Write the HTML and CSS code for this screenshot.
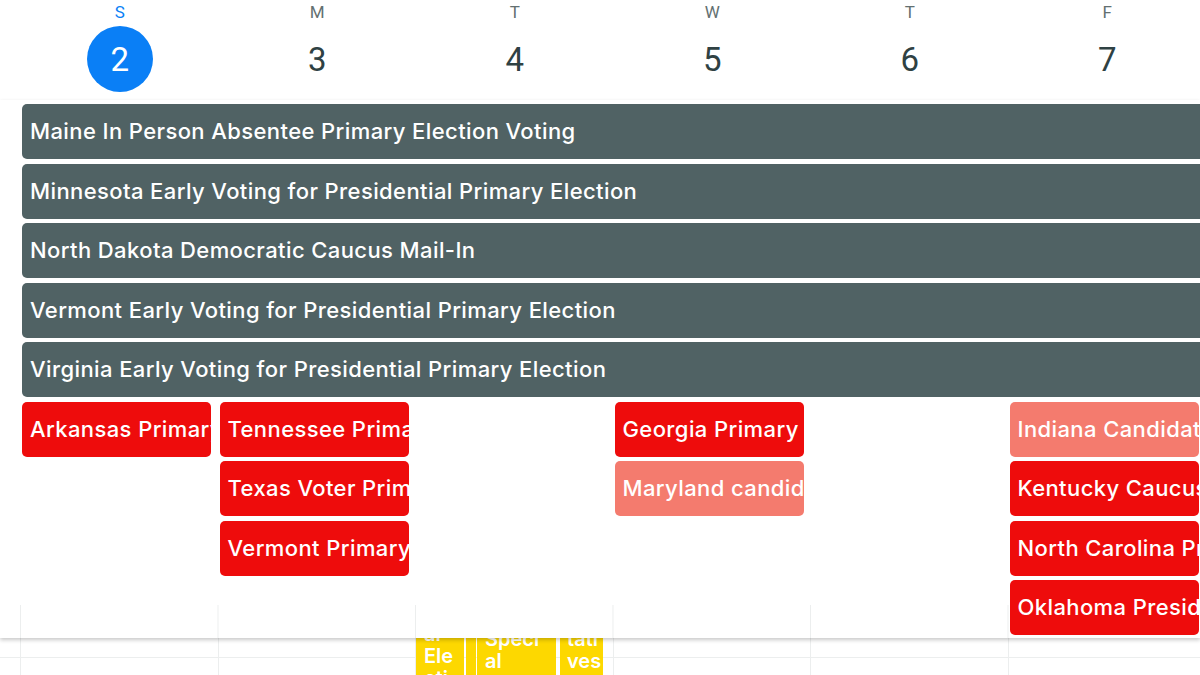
FILE: index.html
```html
<!DOCTYPE html>
<html>
<head>
<meta charset="utf-8">
<link rel="stylesheet" href="styles.css">
</head>
<body>
<div class="cal">
  <div class="head">
    <div class="day today"><span class="dow">S</span><span class="num">2</span></div>
    <div class="day"><span class="dow">M</span><span class="num">3</span></div>
    <div class="day"><span class="dow">T</span><span class="num">4</span></div>
    <div class="day"><span class="dow">W</span><span class="num">5</span></div>
    <div class="day"><span class="dow">T</span><span class="num">6</span></div>
    <div class="day"><span class="dow">F</span><span class="num">7</span></div>
  </div>
  <div class="allday">
    <div class="ev bar r1">Maine In Person Absentee Primary Election Voting</div>
    <div class="ev bar r2">Minnesota Early Voting for Presidential Primary Election</div>
    <div class="ev bar r3">North Dakota Democratic Caucus Mail-In</div>
    <div class="ev bar r4">Vermont Early Voting for Presidential Primary Election</div>
    <div class="ev bar r5">Virginia Early Voting for Presidential Primary Election</div>

    <div class="ev red c1 r6">Arkansas Primary</div>
    <div class="ev red c2 r6">Tennessee Primary</div>
    <div class="ev red c2 r7">Texas Voter Primary</div>
    <div class="ev red c2 r8">Vermont Primary</div>
    <div class="ev red c4 r6">Georgia Primary</div>
    <div class="ev salmon c4 r7">Maryland candidate</div>
    <div class="ev salmon c6 r6">Indiana Candidate</div>
    <div class="ev red c6 r7">Kentucky Caucus</div>
    <div class="ev red c6 r8">North Carolina Primary</div>
    <div class="ev red c6 r9">Oklahoma Presidential</div>
  </div>
  <div class="timegrid">
    <div class="col"></div>
    <div class="col"></div>
    <div class="col yellowcol">
      <div class="yev y1">Sp<br>eci<br>al<br>Ele<br>cti<br>on</div>
      <div class="yev y2"></div>
      <div class="yev y3">Speci<br>al<br>Elec<br>tion</div>
      <div class="yev y4">Rep<br>rese<br>tati<br>ves</div>
    </div>
    <div class="col"></div>
    <div class="col"></div>
    <div class="col"></div>
    <div class="col"></div>
  </div>
</div>
</body>
</html>
```
FILE: styles.css
```css
html, body {
  margin: 0;
  padding: 0;
  background: #ffffff;
  overflow: hidden;
}
body {
  width: 1200px;
  height: 675px;
  font-family: Inter, Roboto, "Noto Sans", "Liberation Sans", sans-serif;
}
.cal {
  width: 1200px;
  height: 675px;
  overflow: hidden;
}
.head {
  display: grid;
  grid-template-columns: repeat(6, 197.5px);
  padding-left: 21px;
  height: 100px;
  background: #ffffff;
  font-family: Roboto, "Noto Sans", sans-serif;
}
.day {
  display: flex;
  flex-direction: column;
  align-items: center;
}
.dow {
  font-size: 17px;
  line-height: 24px;
  color: #637071;
  font-weight: 400;
}
.num {
  margin-top: 2px;
  width: 66px;
  height: 66px;
  border-radius: 50%;
  display: flex;
  align-items: center;
  justify-content: center;
  font-size: 33px;
  color: #2f4143;
  font-weight: 400;
}
.today .dow { color: #0a7ff6; }
.today .num {
  background: #0a7ff6;
  color: #ffffff;
}
.allday {
  position: relative;
  z-index: 2;
  display: grid;
  grid-template-columns: repeat(7, 197.5px);
  grid-auto-rows: 55px;
  row-gap: 4.5px;
  padding: 4px 0 3px 21px;
  height: 531px;
  box-sizing: content-box;
  background-color: #ffffff;
  background-image: linear-gradient(to right, #eceeee 0, #eceeee 1px, transparent 1px);
  background-size: 197.5px 33px;
  background-position: 20px 100%;
  background-repeat: repeat-x;
  box-shadow: 0 2px 4px rgba(0, 0, 0, 0.22);
}
.ev {
  border-radius: 5px;
  color: #ffffff;
  font-size: 22px;
  font-weight: 500;
  line-height: 55px;
  padding-left: 8px;
  white-space: nowrap;
  overflow: hidden;
  letter-spacing: 0.4px;
}
.bar {
  grid-column: 1 / span 7;
  margin-left: 1px;
  background: #506264;
  border-radius: 5px 0 0 5px;
}
.red { background: #ee0c0c; }
.salmon { background: #f47b6e; }
.red, .salmon {
  width: 181px;
  margin-left: 1px;
}
.c1 { grid-column: 1; }
.c2 { grid-column: 2; }
.c4 { grid-column: 4; }
.c6 { grid-column: 6; }
.r1 { grid-row: 1; }
.r2 { grid-row: 2; }
.r3 { grid-row: 3; }
.r4 { grid-row: 4; }
.r5 { grid-row: 5; }
.r6 { grid-row: 6; }
.r7 { grid-row: 7; }
.r8 { grid-row: 8; }
.r9 { grid-row: 9; }

.timegrid {
  position: relative;
  z-index: 1;
  display: grid;
  grid-template-columns: repeat(7, 197.5px);
  padding-left: 20px;
  height: 100px;
  background-image: linear-gradient(to bottom, transparent 19px, #eceeee 19px, #eceeee 20px, transparent 20px);
}
.col {
  border-left: 1px solid #eceeee;
}
.yellowcol {
  display: flex;
  align-items: flex-start;
}
.yev {
  background: #fdd800;
  color: #ffffff;
  font-size: 20px;
  font-weight: 600;
  line-height: 22px;
  white-space: nowrap;
  height: 200px;
  box-sizing: border-box;
  padding: 4px 0 0 8px;
  border-radius: 3px;
  overflow: hidden;
}
.y1 { width: 48px; margin-top: -63px; }
.y2 { width: 10px; margin-left: 2px; margin-top: -60px; padding-left: 0; }
.y3 { width: 79px; margin-left: 1px; margin-top: -14px; }
.y4 { width: 43px; margin-left: 4px; margin-top: -58px; padding-left: 7px; }
```
